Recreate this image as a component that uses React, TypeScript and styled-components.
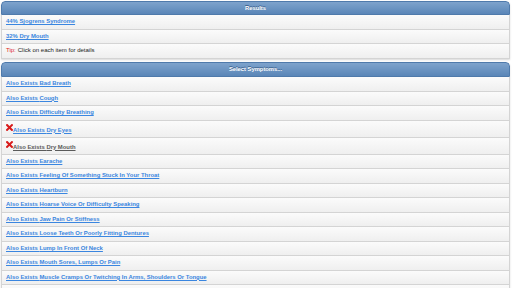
import React from 'react';
import styled, { createGlobalStyle } from 'styled-components';

const GlobalStyle = createGlobalStyle`
  html, body {
    margin: 0;
    padding: 0;
    background: #ffffff;
    font-family: "Liberation Sans", Arial, Helvetica, sans-serif;
  }
`;

const Page = styled.div`
  padding: 1px 2px 0 1px;
  display: flex;
  flex-direction: column;
  gap: 3px;
`;

const List = styled.ul`
  list-style: none;
  margin: 0;
  padding: 0;
  border-radius: 4px 4px 0 0;
  box-shadow: 0 1px 2px rgba(0, 0, 0, 0.15);
  overflow: hidden;
`;

const Divider = styled.li<{ $tall?: boolean }>`
  height: ${(p) => (p.$tall ? '15.5px' : '14px')};
  display: flex;
  align-items: center;
  justify-content: center;
  background: linear-gradient(#7ea3cc, #5a86b8);
  border: 1px solid #4f7aab;
  border-radius: 4px 4px 0 0;
  box-sizing: border-box;
  color: #ffffff;
  font-size: 5.8px;
  font-weight: bold;
  text-shadow: 0 -1px 0 #3b5f8a;
`;

const Item = styled.li<{ $tall?: boolean }>`
  display: flex;
  align-items: ${(p) => (p.$tall ? 'flex-end' : 'center')};
  box-sizing: border-box;
  height: ${(p) => (p.$tall ? '17px' : '14.5px')};
  padding: ${(p) => (p.$tall ? '0 4px 3px' : '0 4px')};
  background: linear-gradient(#fbfbfb, #efefef);
  border: 1px solid #d4d4d4;
  border-top: 0;
  font-size: 6px;
  line-height: 7px;
  color: #222;
`;

const ItemLink = styled.a<{ $visited?: boolean }>`
  color: ${(p) => (p.$visited ? '#5a5a5a' : '#3a86e0')};
  font-weight: bold;
  text-decoration: underline;
  font-size: 5.9px;
`;

const TipLabel = styled.span`
  color: #e0261e;
  margin-right: 2px;
`;

const RemoveIcon = styled.svg`
  width: 7px;
  height: 7px;
  margin-bottom: 3px;
  flex-shrink: 0;
`;

const Cross = () => (
  <RemoveIcon viewBox="0 0 10 10">
    <path d="M1.5 1.5 L8.5 8.5 M8.5 1.5 L1.5 8.5" stroke="#d81c1c" strokeWidth="2.8" strokeLinecap="square" />
  </RemoveIcon>
);

const symptoms: { name: string; removed?: boolean; visited?: boolean }[] = [
  { name: 'Bad Breath' },
  { name: 'Cough' },
  { name: 'Difficulty Breathing' },
  { name: 'Dry Eyes', removed: true },
  { name: 'Dry Mouth', removed: true, visited: true },
  { name: 'Earache' },
  { name: 'Feeling Of Something Stuck In Your Throat' },
  { name: 'Heartburn' },
  { name: 'Hoarse Voice Or Difficulty Speaking' },
  { name: 'Jaw Pain Or Stiffness' },
  { name: 'Loose Teeth Or Poorly Fitting Dentures' },
  { name: 'Lump In Front Of Neck' },
  { name: 'Mouth Sores, Lumps Or Pain' },
  { name: 'Muscle Cramps Or Twitching In Arms, Shoulders Or Tongue' },
];

const App = () => {
  return (
    <>
      <GlobalStyle />
      <Page>
        <List>
          <Divider>Results</Divider>
          <Item>
            <ItemLink href="#">44% Sjogrens Syndrome</ItemLink>
          </Item>
          <Item>
            <ItemLink href="#">32% Dry Mouth</ItemLink>
          </Item>
          <Item>
            <TipLabel>Tip:</TipLabel> Click on each item for details
          </Item>
        </List>
        <List>
          <Divider $tall>Select Symptoms...</Divider>
          {symptoms.map((s) => (
            <Item key={s.name} $tall={s.removed}>
              {s.removed && <Cross />}
              <ItemLink href="#" $visited={s.visited}>Also Exists {s.name}</ItemLink>
            </Item>
          ))}
          <Item />
        </List>
      </Page>
    </>
  );
};

export default App;
